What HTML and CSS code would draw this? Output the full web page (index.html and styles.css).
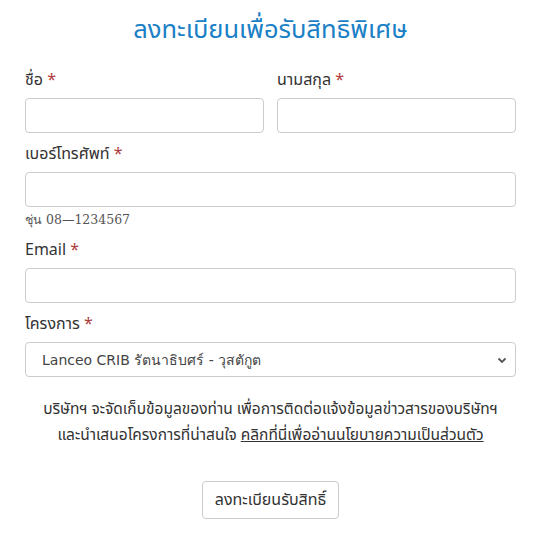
FILE: index.html
```html
<!DOCTYPE html>
<html lang="th">
<head>
<meta charset="utf-8">
<title>ลงทะเบียน</title>
<link rel="stylesheet" href="styles.css">
</head>
<body>
<form class="form">
  <h1 class="title">ลงทะเบียนเพื่อรับสิทธิพิเศษ</h1>
  <div class="row">
    <div class="field">
      <label class="label">ชื่อ <span class="req">*</span></label>
      <input class="input" type="text">
    </div>
    <div class="field">
      <label class="label">นามสกุล <span class="req">*</span></label>
      <input class="input" type="text">
    </div>
  </div>
  <div class="field">
    <label class="label">เบอร์โทรศัพท์ <span class="req">*</span></label>
    <input class="input" type="text">
    <div class="hint">ชุ่น 08—1234567</div>
  </div>
  <div class="field">
    <label class="label">Email <span class="req">*</span></label>
    <input class="input" type="text">
  </div>
  <div class="field">
    <label class="label">โครงการ <span class="req">*</span></label>
    <div class="select">
      <span class="select-text">Lanceo CRIB รัตนาธิบศร์ - วุสตักูต</span>
      <svg class="chev" width="10" height="8" viewBox="0 0 10 8"><path d="M1.5 2.5 L5 6 L8.5 2.5" fill="none" stroke="#555" stroke-width="1.8"/></svg>
    </div>
  </div>
  <p class="note">บริษัทฯ จะจัดเก็บข้อมูลของท่าน เพื่อการติดต่อแจ้งข้อมูลข่าวสารของบริษัทฯ<br>และนำเสนอโครงการที่น่าสนใจ <a class="link" href="#">คลิกที่นี่เพื่ออ่านนโยบายความเป็นส่วนตัว</a></p>
  <div class="actions">
    <button class="btn" type="button">ลงทะเบียนรับสิทธิ์</button>
  </div>
</form>
</body>
</html>
```

FILE: styles.css
```css
* { box-sizing: border-box; }
body {
  margin: 0;
  background: #fff;
  font-family: "Noto Sans Thai", "Noto Sans", sans-serif;
  color: #333;
}
.form {
  padding: 14px 26px 0 25px;
  display: flex;
  flex-direction: column;
}
.title {
  margin: 0 0 24px;
  text-align: center;
  font-size: 25.5px;
  font-weight: 400;
  color: #1b80c6;
  line-height: 32px;
}
.row {
  display: grid;
  grid-template-columns: 1fr 1fr;
  gap: 13px;
}
.field {
  display: flex;
  flex-direction: column;
  margin-bottom: 11px;
}
.label {
  font-size: 16px;
  line-height: 20px;
  margin-bottom: 8px;
  color: #333;
}
.req { color: #b03a3a; }
.input {
  height: 35px;
  border: 1px solid #ccc;
  border-radius: 4px;
  font: inherit;
}
.hint {
  font-family: "DejaVu Serif", serif;
  font-size: 12.5px;
  color: #555;
  margin-top: 4px;
  line-height: 18px;
}
.select {
  height: 35px;
  border: 1px solid #ccc;
  border-radius: 4px;
  display: flex;
  align-items: center;
  justify-content: space-between;
  padding: 0 8px 0 16px;
}
.select-text {
  font-family: "DejaVu Sans", sans-serif;
  font-size: 14px;
  color: #444;
}
.note {
  margin: 9px 0 0;
  text-align: center;
  font-size: 15.5px;
  line-height: 26px;
  color: #333;
}
.link { color: #333; text-decoration: underline; }
.actions {
  display: flex;
  justify-content: center;
  margin-top: 32px;
}
.btn {
  font: inherit;
  font-size: 16px;
  background: #fff;
  border: 1px solid #ccc;
  border-radius: 4px;
  color: #333;
  height: 38px;
  padding: 0 12px;
}
```
